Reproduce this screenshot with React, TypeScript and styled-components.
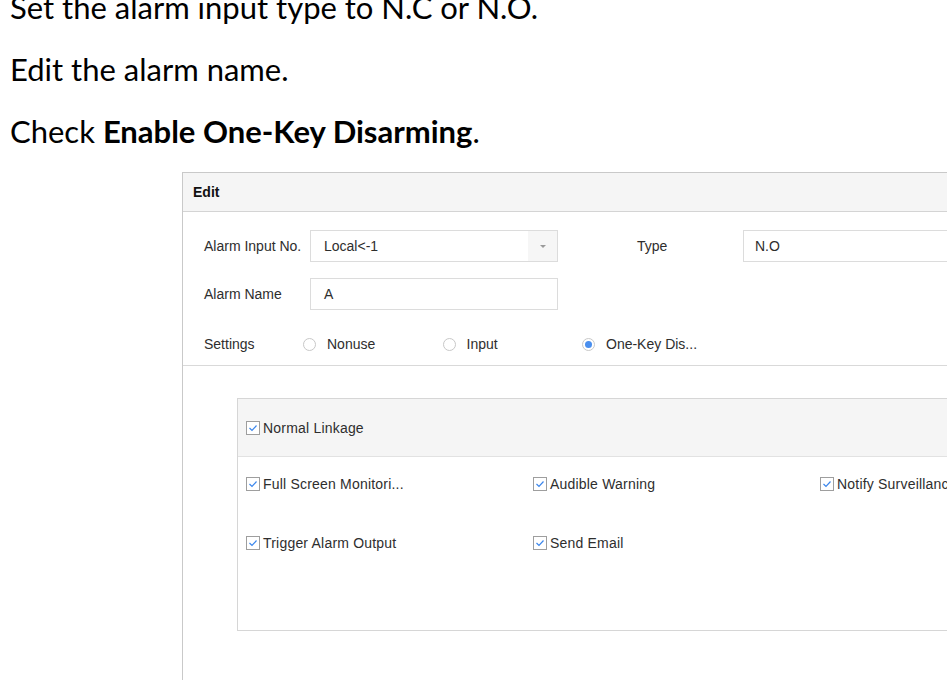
import React from "react";
import styled, { createGlobalStyle } from "styled-components";

const GlobalStyle = createGlobalStyle`
  html, body {
    margin: 0;
    padding: 0;
    background: #ffffff;
  }
  body {
    width: 947px;
    height: 680px;
    overflow: hidden;
  }
`;

const Page = styled.div`
  width: 947px;
  height: 680px;
  overflow: hidden;
`;

const Doc = styled.div`
  margin-top: -24px;
  padding-left: 10px;
  font-family: Lato, "Open Sans", sans-serif;
  font-size: 31px;
  color: #000;
`;

const Para = styled.p`
  margin: 0;
  line-height: 62px;
  height: 62px;
  white-space: nowrap;
`;

const Panel = styled.section`
  margin: 10px 0 0 182px;
  width: 820px;
  height: 520px;
  box-sizing: border-box;
  border: 1px solid #c9c9c9;
  border-bottom: none;
  font-family: "Liberation Sans", Arial, sans-serif;
  font-size: 14px;
  color: #2e2e2e;
`;

const PanelHeader = styled.div`
  height: 38px;
  display: flex;
  align-items: center;
  padding-left: 10px;
  background: #f5f5f5;
  border-bottom: 1px solid #d4d4d4;
  font-weight: bold;
  color: #111;
`;

const Form = styled.div`
  display: flex;
  flex-direction: column;
  gap: 16px;
  padding: 18px 0 5px 21px;
  border-bottom: 1px solid #d9d9d9;
`;

const Row = styled.div<{ $top?: number }>`
  display: flex;
  align-items: center;
  height: 32px;
  margin-top: ${(p) => p.$top ?? 0}px;
`;

const Label = styled.div<{ $w: number }>`
  width: ${(p) => p.$w}px;
  flex: none;
  white-space: nowrap;
`;

const Field = styled.div<{ $w: number; $pad?: number }>`
  width: ${(p) => p.$w}px;
  height: 32px;
  box-sizing: border-box;
  flex: none;
  display: flex;
  align-items: center;
  padding-left: ${(p) => p.$pad ?? 13}px;
  border: 1px solid #dcdcdc;
  background: #fff;
`;

const FieldText = styled.span`
  flex: 1;
`;

const Arrow = styled.div`
  width: 29px;
  height: 100%;
  display: flex;
  align-items: center;
  justify-content: center;
  background: #f6f6f6;
  &::after {
    content: "";
    border-left: 3px solid transparent;
    border-right: 3px solid transparent;
    border-top: 3px solid #9a9a9a;
  }
`;

const Spacer = styled.div<{ $w: number }>`
  width: ${(p) => p.$w}px;
  flex: none;
`;

const RadioGroup = styled.div`
  display: flex;
  margin-left: -7px;
`;

const RadioItem = styled.label`
  width: 139.5px;
  display: flex;
  align-items: center;
  gap: 11px;
  white-space: nowrap;
`;

const RadioDot = styled.span<{ $on?: boolean }>`
  width: 13px;
  height: 13px;
  box-sizing: border-box;
  border-radius: 50%;
  border: 1px solid #c8c8c8;
  display: flex;
  align-items: center;
  justify-content: center;
  &::after {
    content: "";
    width: 7px;
    height: 7px;
    border-radius: 50%;
    background: ${(p) => (p.$on ? "#4a8fee" : "transparent")};
  }
`;

const LinkageWrap = styled.div`
  padding: 32px 0 0 54px;
`;

const Linkage = styled.div`
  width: 760px;
  height: 233px;
  box-sizing: border-box;
  border: 1px solid #d6d6d6;
  border-right: none;
`;

const LinkageHeader = styled.div`
  height: 57px;
  display: flex;
  align-items: center;
  padding-left: 8px;
  background: #f5f5f5;
  border-bottom: 1px solid #e2e2e2;
`;

const LinkageGrid = styled.div`
  display: grid;
  grid-template-columns: 287px 287px 287px;
  grid-auto-rows: 22px;
  row-gap: 37px;
  padding: 16px 0 0 8px;
`;

const CheckItem = styled.label`
  display: flex;
  align-items: center;
  gap: 3px;
  white-space: nowrap;
  letter-spacing: 0.2px;
`;

const CheckBox = styled.span`
  width: 14px;
  height: 14px;
  box-sizing: border-box;
  border: 1px solid #9e9e9e;
  background: #fff;
  display: flex;
  align-items: center;
  justify-content: center;
  flex: none;
`;

const Check = () => (
  <CheckBox>
    <svg width="10" height="10" viewBox="0 0 10 10">
      <polyline points="1.5,5 4,7.5 8.5,2.5" fill="none" stroke="#3b86ec" strokeWidth="1.2" />
    </svg>
  </CheckBox>
);

const CheckOption = ({ text }: { text: string }) => (
  <CheckItem>
    <Check />
    {text}
  </CheckItem>
);

export default function App() {
  return (
    <Page>
      <GlobalStyle />
      <Doc>
        <Para>Set the alarm input type to N.C or N.O.</Para>
        <Para>Edit the alarm name.</Para>
        <Para>
          Check <b>Enable One-Key Disarming</b>.
        </Para>
      </Doc>
      <Panel>
        <PanelHeader>Edit</PanelHeader>
        <Form>
          <Row>
            <Label $w={106}>Alarm Input No.</Label>
            <Field $w={248}>
              <FieldText>Local&lt;-1</FieldText>
              <Arrow />
            </Field>
            <Spacer $w={79} />
            <Label $w={106}>Type</Label>
            <Field $w={300} $pad={11}>
              <FieldText>N.O</FieldText>
            </Field>
          </Row>
          <Row>
            <Label $w={106}>Alarm Name</Label>
            <Field $w={248}>
              <FieldText>A</FieldText>
            </Field>
          </Row>
          <Row $top={2}>
            <Label $w={106}>Settings</Label>
            <RadioGroup>
              <RadioItem>
                <RadioDot />
                Nonuse
              </RadioItem>
              <RadioItem>
                <RadioDot />
                Input
              </RadioItem>
              <RadioItem>
                <RadioDot $on />
                One-Key Dis...
              </RadioItem>
            </RadioGroup>
          </Row>
        </Form>
        <LinkageWrap>
          <Linkage>
            <LinkageHeader>
              <CheckOption text="Normal Linkage" />
            </LinkageHeader>
            <LinkageGrid>
              <CheckOption text="Full Screen Monitori..." />
              <CheckOption text="Audible Warning" />
              <CheckOption text="Notify Surveillance Center" />
              <CheckOption text="Trigger Alarm Output" />
              <CheckOption text="Send Email" />
            </LinkageGrid>
          </Linkage>
        </LinkageWrap>
      </Panel>
    </Page>
  );
}
